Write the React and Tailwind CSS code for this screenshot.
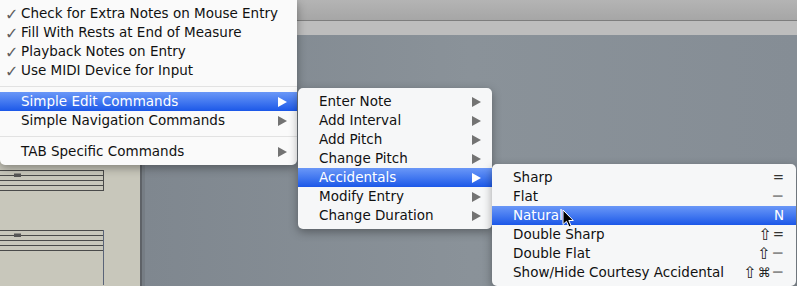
import React from "react";

const menuFont = { fontFamily: '"DejaVu Sans", "Noto Sans", sans-serif' };

function Arrow({ active }) {
  return (
    <svg width="9" height="10" viewBox="0 0 9 10" className="shrink-0">
      <polygon points="0,0 9,5 0,10" fill={active ? "#ffffff" : "#737373"} />
    </svg>
  );
}

function Row({ label, checked, sub, active, shortcut, pad = "pl-[21px] pr-[10px]" }) {
  return (
    <div
      className={`relative flex items-center h-[19px] ${pad} ${
        active ? "bg-gradient-to-b from-[#6a97f7] to-[#1b57e8] text-white" : "text-[#111]"
      }`}
    >
      {checked && (
        <span className="absolute left-[5px] top-[1px] text-[16px] font-bold leading-[19px] text-[#5f5f5f]">✓</span>
      )}
      <span className="flex-1 whitespace-nowrap text-[13.5px] leading-[19px]">{label}</span>
      {sub && <Arrow active={active} />}
      {shortcut}
    </div>
  );
}

function Sep() {
  return (
    <div className="h-[12px] flex items-center">
      <div className="h-px w-full bg-[#e2e2e2]" />
    </div>
  );
}

const Eq = () => <span className="text-[#333]">=</span>;
const Minus = () => <span className="text-[#8c8c8c] font-bold text-[15px]">−</span>;
const Shift = () => <span className="text-[16px] leading-[19px]">⇧</span>;
const Cmd = () => <span className="text-[13px] leading-[19px]">⌘</span>;

function Shortcut({ children, active }) {
  return (
    <span
      className={`flex items-center gap-[1px] text-[13.5px] leading-[19px] whitespace-nowrap ${
        active ? "text-white" : "text-[#222]"
      }`}
    >
      {children}
    </span>
  );
}

function Staff({ top }) {
  const ys = [0, 5, 10, 15, 20];
  return (
    <g transform={`translate(0 ${top})`}>
      {ys.map((y) => (
        <line key={y} x1="0" x2="104" y1={y + 0.5} y2={y + 0.5} stroke="#4a4a4a" strokeWidth="1" />
      ))}
      <rect x="14" y="3.5" width="7" height="3.5" fill="#555" />
    </g>
  );
}

export default function App() {
  return (
    <div className="relative w-[797px] h-[286px] overflow-hidden bg-[#848c94]" style={menuFont}>
      {/* window background */}
      <div className="flex flex-col h-full">
        <div className="h-[21px] bg-gradient-to-b from-[#b4b4b4] to-[#a6a6a6] border-b border-[#7d7d7d]" />
        <div className="h-[14px] bg-[#bdbdbd]" />
        <div className="flex flex-1">
          <div className="w-[140px] bg-[#c8c7bb]">
            <svg width="140" height="250" viewBox="0 0 140 250">
              <Staff top={135} />
              <Staff top={195} />
              <line x1="103.5" x2="103.5" y1="135" y2="155.5" stroke="#4a4a4a" />
              <line x1="103.5" x2="103.5" y1="195" y2="250" stroke="#5a6478" />
            </svg>
          </div>
          <div className="w-[2px] bg-[#5e6267]" />
          <div className="w-[3px] bg-[#767d84]" />
          <div className="flex-1 bg-gradient-to-r from-[#7f878f] via-[#8a9299] to-[#858d95]" />
        </div>
      </div>

      {/* main menu */}
      <div className="absolute left-0 top-0 w-[297px] pt-[4px] pb-[4px] bg-[#fafafa] rounded-br-[5px] rounded-bl-[5px] shadow-[0_3px_10px_rgba(0,0,0,0.35)]">
        <Row label="Check for Extra Notes on Mouse Entry" checked />
        <Row label="Fill With Rests at End of Measure" checked />
        <Row label="Playback Notes on Entry" checked />
        <Row label="Use MIDI Device for Input" checked />
        <Sep />
        <Row label="Simple Edit Commands" sub active />
        <Row label="Simple Navigation Commands" sub />
        <Sep />
        <Row label="TAB Specific Commands" sub />
      </div>

      {/* edit commands submenu */}
      <div className="absolute left-[298px] top-[88px] w-[194px] pt-[4px] pb-[4px] bg-[#f6f7f8] rounded-[5px] shadow-[0_3px_10px_rgba(0,0,0,0.35)]">
        <Row label="Enter Note" sub pad="pl-[21px] pr-[11px]" />
        <Row label="Add Interval" sub pad="pl-[21px] pr-[11px]" />
        <Row label="Add Pitch" sub pad="pl-[21px] pr-[11px]" />
        <Row label="Change Pitch" sub pad="pl-[21px] pr-[11px]" />
        <Row label="Accidentals" sub active pad="pl-[21px] pr-[11px]" />
        <Row label="Modify Entry" sub pad="pl-[21px] pr-[11px]" />
        <Row label="Change Duration" sub pad="pl-[21px] pr-[11px]" />
      </div>

      {/* accidentals submenu */}
      <div className="absolute left-[492px] top-[164px] w-[304px] pt-[4px] pb-[4px] bg-[#f6f7f8] rounded-[5px] shadow-[0_3px_10px_rgba(0,0,0,0.35)]">
        <Row label="Sharp" pad="pl-[21px] pr-[12px]" shortcut={<Shortcut><Eq /></Shortcut>} />
        <Row label="Flat" pad="pl-[21px] pr-[12px]" shortcut={<Shortcut><Minus /></Shortcut>} />
        <Row label="Natural" active pad="pl-[21px] pr-[12px]" shortcut={<Shortcut active>N</Shortcut>} />
        <Row label="Double Sharp" pad="pl-[21px] pr-[12px]" shortcut={<Shortcut><Shift /><Eq /></Shortcut>} />
        <Row label="Double Flat" pad="pl-[21px] pr-[12px]" shortcut={<Shortcut><Shift /><Minus /></Shortcut>} />
        <Row
          label="Show/Hide Courtesy Accidental"
          pad="pl-[21px] pr-[12px]"
          shortcut={<Shortcut><Shift /><Cmd /><Minus /></Shortcut>}
        />
      </div>

      {/* mouse pointer */}
      <svg className="absolute left-[562px] top-[209px]" width="13" height="20" viewBox="0 0 13 20">
        <path
          d="M1 1 L1 15.5 L4.5 12.3 L7 18 L9.2 17 L6.8 11.5 L11.3 11.5 Z"
          fill="#000"
          stroke="#fff"
          strokeWidth="1"
          strokeLinejoin="round"
        />
      </svg>
    </div>
  );
}
